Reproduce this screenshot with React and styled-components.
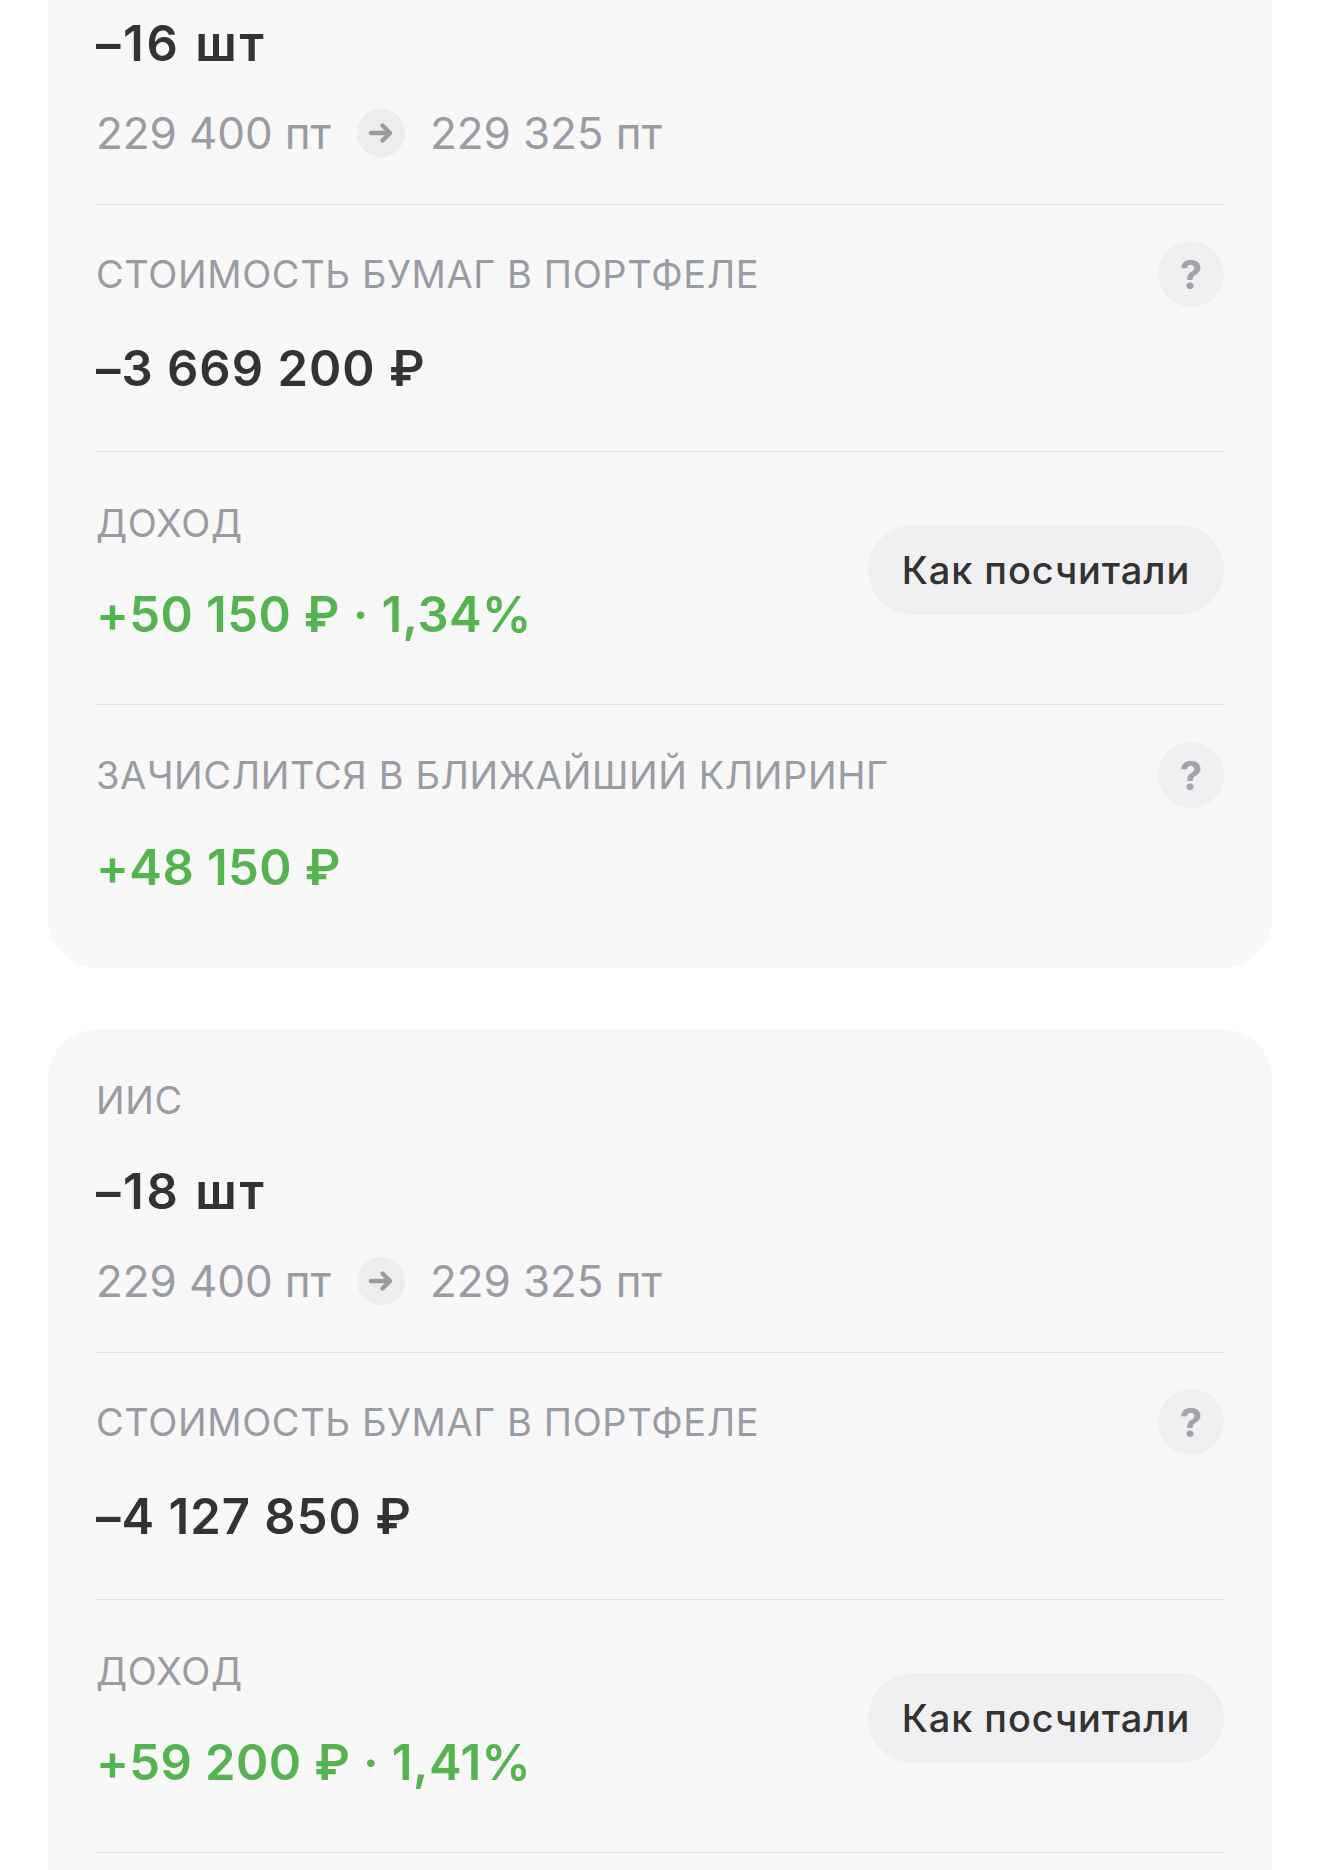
import React from 'react';
import styled, { createGlobalStyle } from 'styled-components';

const GlobalStyle = createGlobalStyle`
  html, body {
    margin: 0;
    padding: 0;
    background: #fff;
  }
  body {
    height: 1870px;
    overflow: hidden;
    font-family: Inter, "Liberation Sans", sans-serif;
  }
`;

const Page = styled.div`
  display: flex;
  flex-direction: column;
  gap: 61px;
  padding: 0 48px;
`;

const Card = styled.div`
  background: #f8f8f9;
  border-radius: ${(p) => (p.$cut ? '0 0 50px 50px' : '50px')};
  padding: 0 48px;
`;

const Section = styled.div`
  display: flex;
  align-items: center;
  justify-content: space-between;
  padding: ${(p) => p.$pad};
  & + & {
    border-top: 1px solid #e2e2e4;
  }
`;

const Content = styled.div`
  flex: 1;
  min-width: 0;
`;

const LabelRow = styled.div`
  display: flex;
  align-items: center;
  justify-content: space-between;
  height: 66px;
`;

const Label = styled.div`
  font-size: 38px;
  font-weight: 400;
  letter-spacing: 0.6px;
  color: #9a9ca3;
`;

const Value = styled.div`
  margin-top: ${(p) => p.$gap}px;
  font-size: 49px;
  line-height: 58px;
  font-weight: 600;
  letter-spacing: ${(p) => p.$spacing || 1}px;
  color: ${(p) => (p.$green ? '#55b44f' : '#333333')};
`;

const PriceRow = styled.div`
  display: flex;
  align-items: center;
  height: 56px;
  margin-top: 32px;
  font-size: 44px;
  letter-spacing: -0.1px;
  color: #9a9ca3;
`;

const ArrowCircle = styled.span`
  display: flex;
  align-items: center;
  justify-content: center;
  width: 48px;
  height: 48px;
  margin: 0 25px 0 26px;
  border-radius: 50%;
  background: #eceded;
`;

const HelpButton = styled.div`
  display: flex;
  align-items: center;
  justify-content: center;
  width: 66px;
  height: 66px;
  border-radius: 50%;
  background: #f0f0f2;
  font-size: 40px;
  font-weight: 700;
  color: #a3a4ab;
`;

const CalcButton = styled.div`
  display: flex;
  align-items: center;
  justify-content: center;
  flex-shrink: 0;
  width: 356px;
  height: 90px;
  margin-top: 5px;
  border-radius: 45px;
  background: #f0f0f2;
  font-size: 38px;
  font-weight: 500;
  letter-spacing: 0.9px;
  color: #333333;
`;

const Arrow = () => (
  <svg width="26" height="26" viewBox="0 0 26 26" fill="none">
    <path
      d="M3 13h19M14.5 5.5L22 13l-7.5 7.5"
      stroke="#9a9ca3"
      strokeWidth="4.4"
      strokeLinecap="round"
      strokeLinejoin="round"
    />
  </svg>
);

const cards = [
  {
    cut: true,
    qty: '–16 шт',
    cost: '–3 669 200 ₽',
    income: '+50 150 ₽ · 1,34%',
    credit: '+48 150 ₽',
  },
  {
    label: 'ИИС',
    qty: '–18 шт',
    cost: '–4 127 850 ₽',
    income: '+59 200 ₽ · 1,41%',
  },
];

function AccountCard({ data }) {
  return (
    <Card $cut={data.cut}>
      <Section $pad={data.cut ? '15px 0 43px' : '38px 0 43px'}>
        <Content>
          {data.label && (
            <LabelRow>
              <Label>{data.label}</Label>
            </LabelRow>
          )}
          <Value $gap={data.label ? 30 : 0} $spacing={2.6}>{data.qty}</Value>
          <PriceRow>
            229 400 пт
            <ArrowCircle>
              <Arrow />
            </ArrowCircle>
            229 325 пт
          </PriceRow>
        </Content>
      </Section>

      <Section $pad="36px 0 53px">
        <Content>
          <LabelRow>
            <Label>СТОИМОСТЬ БУМАГ В ПОРТФЕЛЕ</Label>
            <HelpButton>?</HelpButton>
          </LabelRow>
          <Value $gap={33}>{data.cost}</Value>
        </Content>
      </Section>

      <Section $pad="38px 0 60px">
        <Content>
          <LabelRow>
            <Label>ДОХОД</Label>
          </LabelRow>
          <Value $green $spacing={0.4} $gap={30}>{data.income}</Value>
        </Content>
        <CalcButton>Как посчитали</CalcButton>
      </Section>

      <Section $pad="37px 0 71px">
        {data.credit && (
          <Content>
            <LabelRow>
              <Label>ЗАЧИСЛИТСЯ В БЛИЖАЙШИЙ КЛИРИНГ</Label>
              <HelpButton>?</HelpButton>
            </LabelRow>
            <Value $green $spacing={0.4} $gap={31}>{data.credit}</Value>
          </Content>
        )}
      </Section>
    </Card>
  );
}

export default function App() {
  return (
    <>
      <GlobalStyle />
      <Page>
        {cards.map((c) => (
          <AccountCard key={c.qty} data={c} />
        ))}
      </Page>
    </>
  );
}
